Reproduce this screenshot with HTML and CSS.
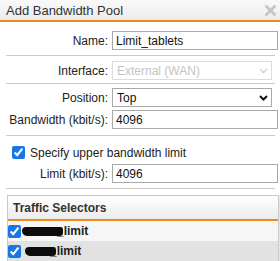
FILE: index.html
```html
<!DOCTYPE html>
<html lang="en">
<head>
<meta charset="UTF-8">
<meta name="viewport" content="width=device-width, initial-scale=1.0">
<title>Add Bandwidth Pool</title>
<link rel="stylesheet" href="styles.css">
</head>
<body>
<div class="dialog">
    <div class="titlebar">
        <span class="title">Add Bandwidth Pool</span>
        <svg class="close" width="11" height="11" viewBox="0 0 11 11">
            <path d="M1.5 1.5 L9.5 9.5 M9.5 1.5 L1.5 9.5" stroke="#c6c6c6" stroke-width="3" stroke-linecap="round"/>
        </svg>
    </div>

    <div class="section sec-name">
        <div class="row">
            <label class="label" for="pool-name">Name:</label>
            <input id="pool-name" class="field" type="text" value="Limit_tablets">
        </div>
    </div>

    <div class="section sec-iface">
        <div class="row">
            <label class="label" for="iface">Interface:</label>
            <div class="select-wrap">
                <select id="iface" class="field select" disabled>
                    <option>External (WAN)</option>
                </select>
                <svg class="chevron" width="9" height="6" viewBox="0 0 9 6">
                    <path d="M1 1 L4.5 4.5 L8 1" fill="none" stroke="#cfcfcf" stroke-width="1.3"/>
                </svg>
            </div>
        </div>
    </div>

    <div class="section sec-pos">
        <div class="row">
            <label class="label" for="position">Position:</label>
            <div class="select-wrap">
                <select id="position" class="field select">
                    <option>Top</option>
                    <option>Bottom</option>
                </select>
                <svg class="chevron" width="9" height="6" viewBox="0 0 9 6">
                    <path d="M1 1 L4.5 4.5 L8 1" fill="none" stroke="#111" stroke-width="2"/>
                </svg>
            </div>
        </div>
        <div class="row">
            <label class="label" for="bandwidth">Bandwidth (kbit/s):</label>
            <input id="bandwidth" class="field" type="text" value="4096">
        </div>
    </div>

    <div class="section sec-limit">
        <label class="check-row">
            <input type="checkbox" checked>
            <span>Specify upper bandwidth limit</span>
        </label>
        <div class="row">
            <label class="label" for="limit">Limit (kbit/s):</label>
            <input id="limit" class="field" type="text" value="4096">
        </div>
    </div>

    <div class="selectors">
        <div class="selectors-head">Traffic Selectors</div>
        <div class="sel-row">
            <input type="checkbox" checked>
            <span class="redacted r1"></span><span class="sel-name">_limit</span>
        </div>
        <div class="sel-row alt">
            <input type="checkbox" checked>
            <span class="redacted r2"></span><span class="sel-name">_limit</span>
        </div>
    </div>
</div>
</body>
</html>
```

FILE: styles.css
```css
body {
    margin: 0;
    padding: 0;
    font-family: "Liberation Sans", Arial, sans-serif;
    font-size: 12px;
    color: #222;
    background-color: #fff;
}
.titlebar {
    height: 20px;
    display: flex;
    align-items: center;
    justify-content: space-between;
    padding: 0 4px 0 6px;
    background: linear-gradient(#f9f9f9, #ececec);
    border-bottom: 2px solid #ec8a1c;
}
.title {
    font-size: 13px;
    color: #333;
}
.section {
    margin: 0 5px 0 6px;
    border-bottom: 1px solid #c9c9c9;
    display: flex;
    flex-direction: column;
    gap: 3px;
}
.sec-name {
    padding: 9px 0 5px;
}
.sec-iface {
    padding: 5px 0 3px;
}
.sec-pos {
    padding: 4px 0 6px;
}
.sec-limit {
    padding: 8px 0 5px;
}
.row {
    display: grid;
    grid-template-columns: 102px auto;
    column-gap: 4px;
    align-items: center;
}
.label {
    text-align: right;
    white-space: nowrap;
}
.field {
    width: 166px;
    height: 19px;
    margin: 0;
    padding: 0 3px;
    box-sizing: border-box;
    border: 1px solid #a9a9a9;
    border-radius: 0;
    font-family: inherit;
    font-size: 12px;
    color: #111;
    background-color: #fff;
    outline: none;
}
.select-wrap {
    position: relative;
    width: 160px;
    height: 19px;
}
.select {
    width: 160px;
    appearance: none;
    -webkit-appearance: none;
    padding-left: 4px;
}
.select:disabled {
    color: #c4c4c4;
    border-color: #dcdcdc;
    opacity: 1;
}
.chevron {
    position: absolute;
    right: 4px;
    top: 7px;
    pointer-events: none;
}
.check-row {
    height: 17px;
    display: flex;
    align-items: center;
}
.check-row input {
    width: 13px;
    height: 13px;
    margin: 0 5px 0 6px;
}
input[type="checkbox"] {
    accent-color: #1877e6;
}
.selectors {
    margin: 6px 1px 0 7px;
    border: 1px solid #c9c9c9;
    box-shadow: 1px 1px 2px rgba(0, 0, 0, 0.15);
}
.selectors-head {
    height: 23px;
    display: flex;
    align-items: center;
    padding-left: 5px;
    font-weight: bold;
    color: #333;
    background: linear-gradient(#ffffff, #ececec);
    border-bottom: 2px solid #ec8a1c;
}
.sel-row {
    height: 20px;
    display: flex;
    align-items: center;
    background-color: #f6f6f6;
}
.sel-row.alt {
    background-color: #e2e2e2;
}
.sel-row input {
    width: 13px;
    height: 13px;
    margin: 0;
}
.redacted {
    display: inline-block;
    height: 9px;
    background-color: #0d0d0d;
    border-radius: 5px 3px 4px 6px;
}
.r1 {
    width: 41px;
    margin-left: 1px;
}
.r2 {
    width: 31px;
    margin-left: 4px;
}
.sel-name {
    font-weight: bold;
    margin-left: -6px;
}
```
